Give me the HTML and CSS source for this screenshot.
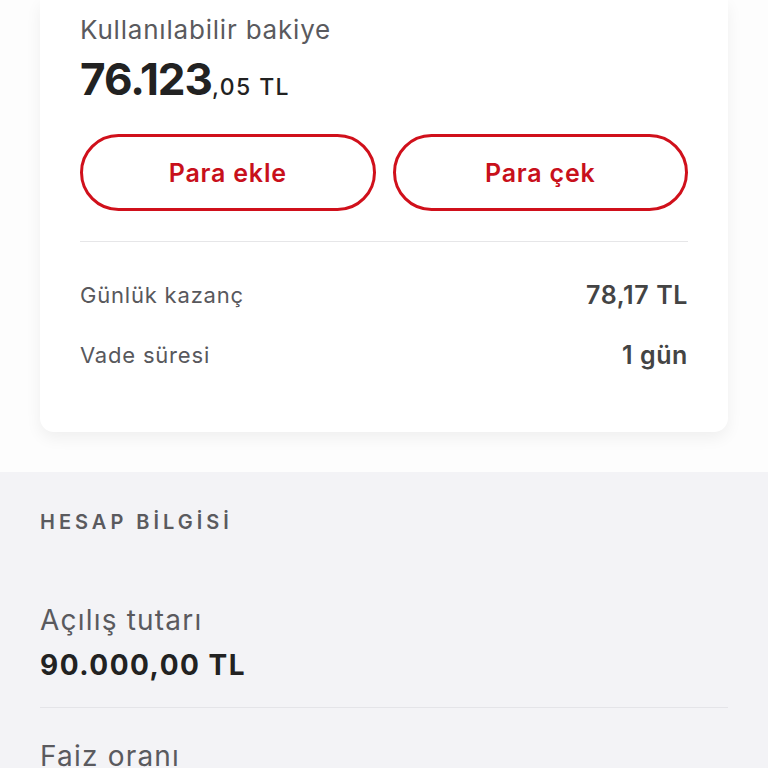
FILE: index.html
```html
<!DOCTYPE html>
<html lang="tr">
<head>
  <meta charset="UTF-8">
  <title>Hesap</title>
  <link rel="stylesheet" href="styles.css">
</head>
<body>

  <div class="top">
    <div class="card">
      <div class="balance-label">Kullanılabilir bakiye</div>
      <div class="balance"><span class="whole">76.123</span><span class="cents">,05 TL</span></div>

      <div class="actions">
        <button class="btn">Para ekle</button>
        <button class="btn">Para çek</button>
      </div>

      <div class="rows">
        <div class="row">
          <span class="row-label">Günlük kazanç</span>
          <span class="row-value">78,17 TL</span>
        </div>
        <div class="row">
          <span class="row-label">Vade süresi</span>
          <span class="row-value">1 gün</span>
        </div>
      </div>
    </div>
  </div>

  <div class="info">
    <h3 class="info-title">HESAP BİLGİSİ</h3>

    <div class="info-item">
      <div class="info-label">Açılış tutarı</div>
      <div class="info-value">90.000,00 TL</div>
    </div>

    <div class="info-item last">
      <div class="info-label">Faiz oranı</div>
    </div>
  </div>

</body>
</html>
```

FILE: styles.css
```css
body {
  margin: 0;
  font-family: 'Inter', 'Noto Sans', sans-serif;
  background: #f3f3f6;
  color: #222;
}

.top {
  background: #fdfdfd;
  padding: 0 40px 40px;
}

.card {
  background: #fff;
  border-radius: 0 0 14px 14px;
  box-shadow: 0 6px 16px rgba(0, 0, 0, 0.06);
  padding: 13px 40px 59px;
}

.balance-label {
  font-size: 26px;
  line-height: 34px;
  letter-spacing: 0.8px;
  color: #5a5a5e;
}

.balance {
  margin-top: 8px;
  font-size: 44px;
  line-height: 48px;
  color: #222;
}

.balance .whole {
  font-weight: 700;
  letter-spacing: -1px;
}

.balance .cents {
  font-size: 23px;
  line-height: 20px;
  font-weight: 500;
  letter-spacing: 1.4px;
}

.actions {
  display: flex;
  gap: 17px;
  margin-top: 31px;
  padding-bottom: 30px;
  border-bottom: 1px solid #e6e6e8;
}

.btn {
  flex: 1;
  height: 77px;
  background: #fff;
  border: 3px solid #d0101b;
  border-radius: 40px;
  color: #c8101b;
  font-family: inherit;
  font-size: 25px;
  font-weight: 600;
  letter-spacing: 0.8px;
  cursor: pointer;
}

.rows {
  padding-top: 35px;
}

.row {
  display: flex;
  justify-content: space-between;
  align-items: center;
  height: 36px;
  margin-bottom: 24px;
}

.row:last-child {
  margin-bottom: 0;
}

.row-label {
  font-size: 22px;
  letter-spacing: 0.8px;
  color: #58585c;
}

.row-value {
  font-size: 25px;
  font-weight: 600;
  letter-spacing: 0.6px;
  color: #444;
}

.info {
  padding: 38px 40px 0;
}

.info-title {
  margin: 0;
  font-size: 20px;
  line-height: 24px;
  font-weight: 600;
  letter-spacing: 4px;
  color: #5a5a5e;
}

.info-item {
  padding: 69px 0 24px;
  border-bottom: 1px solid #e4e4e8;
}

.info-item + .info-item {
  padding-top: 31px;
}

.info-item.last {
  padding-bottom: 0;
  border-bottom: none;
}

.info-label {
  font-size: 28px;
  line-height: 34px;
  letter-spacing: 1.2px;
  color: #5a5a5e;
}

.info-value {
  margin-top: 10px;
  font-size: 28px;
  line-height: 36px;
  font-weight: 700;
  letter-spacing: 1.5px;
  color: #222;
}
```
